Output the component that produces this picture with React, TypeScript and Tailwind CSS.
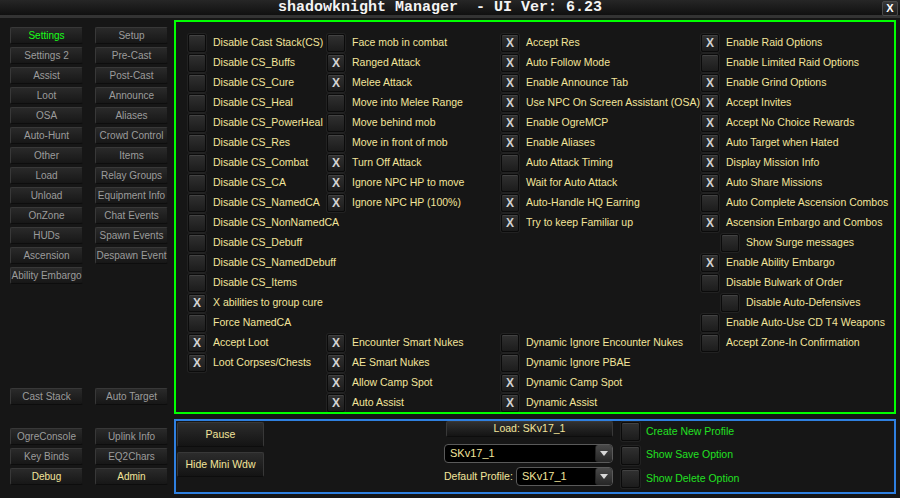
import React from "react";

type Item = { label?: string; checked?: boolean; indent?: boolean };

const col1: Item[] = [
  { label: "Disable Cast Stack(CS)" },
  { label: "Disable CS_Buffs" },
  { label: "Disable CS_Cure" },
  { label: "Disable CS_Heal" },
  { label: "Disable CS_PowerHeal" },
  { label: "Disable CS_Res" },
  { label: "Disable CS_Combat" },
  { label: "Disable CS_CA" },
  { label: "Disable CS_NamedCA" },
  { label: "Disable CS_NonNamedCA" },
  { label: "Disable CS_Debuff" },
  { label: "Disable CS_NamedDebuff" },
  { label: "Disable CS_Items" },
  { label: "X abilities to group cure", checked: true },
  { label: "Force NamedCA" },
  { label: "Accept Loot", checked: true },
  { label: "Loot Corpses/Chests", checked: true },
];

const col2: Item[] = [
  { label: "Face mob in combat" },
  { label: "Ranged Attack", checked: true },
  { label: "Melee Attack", checked: true },
  { label: "Move into Melee Range" },
  { label: "Move behind mob" },
  { label: "Move in front of mob" },
  { label: "Turn Off Attack", checked: true },
  { label: "Ignore NPC HP to move", checked: true },
  { label: "Ignore NPC HP (100%)", checked: true },
  {},
  {},
  {},
  {},
  {},
  {},
  { label: "Encounter Smart Nukes", checked: true },
  { label: "AE Smart Nukes", checked: true },
  { label: "Allow Camp Spot", checked: true },
  { label: "Auto Assist", checked: true },
];

const col3: Item[] = [
  { label: "Accept Res", checked: true },
  { label: "Auto Follow Mode", checked: true },
  { label: "Enable Announce Tab", checked: true },
  { label: "Use NPC On Screen Assistant (OSA)", checked: true },
  { label: "Enable OgreMCP", checked: true },
  { label: "Enable Aliases", checked: true },
  { label: "Auto Attack Timing" },
  { label: "Wait for Auto Attack" },
  { label: "Auto-Handle HQ Earring", checked: true },
  { label: "Try to keep Familiar up", checked: true },
  {},
  {},
  {},
  {},
  {},
  { label: "Dynamic Ignore Encounter Nukes" },
  { label: "Dynamic Ignore PBAE" },
  { label: "Dynamic Camp Spot", checked: true },
  { label: "Dynamic Assist", checked: true },
];

const col4: Item[] = [
  { label: "Enable Raid Options", checked: true },
  { label: "Enable Limited Raid Options" },
  { label: "Enable Grind Options", checked: true },
  { label: "Accept Invites", checked: true },
  { label: "Accept No Choice Rewards", checked: true },
  { label: "Auto Target when Hated", checked: true },
  { label: "Display Mission Info", checked: true },
  { label: "Auto Share Missions", checked: true },
  { label: "Auto Complete Ascension Combos" },
  { label: "Ascension Embargo and Combos", checked: true },
  { label: "Show Surge messages", indent: true },
  { label: "Enable Ability Embargo", checked: true },
  { label: "Disable Bulwark of Order" },
  { label: "Disable Auto-Defensives", indent: true },
  { label: "Enable Auto-Use CD T4 Weapons" },
  { label: "Accept Zone-In Confirmation" },
];

const sideLeft = [
  "Settings",
  "Settings 2",
  "Assist",
  "Loot",
  "OSA",
  "Auto-Hunt",
  "Other",
  "Load",
  "Unload",
  "OnZone",
  "HUDs",
  "Ascension",
  "Ability Embargo",
];
const sideRight = [
  "Setup",
  "Pre-Cast",
  "Post-Cast",
  "Announce",
  "Aliases",
  "Crowd Control",
  "Items",
  "Relay Groups",
  "Equipment Info",
  "Chat Events",
  "Spawn Events",
  "Despawn Event",
];

function Box({ checked, size = 18 }: { checked?: boolean; size?: number }) {
  return (
    <div
      className={
        "shrink-0 flex items-center justify-center rounded-[2px] border border-[#0b0b0b] bg-linear-to-b from-[#313131] to-[#1c1c1c] shadow-[inset_0_1px_0_#424242,0_0_0_1px_#222222] " +
        (size === 19 ? "w-[19px] h-[19px]" : "w-[18px] h-[18px]")
      }
    >
      {checked && (
        <span className="text-[#d2d2d2] text-[12px] font-bold leading-none font-['Liberation_Sans',sans-serif]">
          X
        </span>
      )}
    </div>
  );
}

function Row({ item }: { item: Item }) {
  if (!item.label) return <div className="h-[20px] shrink-0" />;
  return (
    <div className={"h-[20px] shrink-0 flex items-center gap-[7px] " + (item.indent ? "pl-[20px]" : "")}>
      <Box checked={item.checked} />
      <span className="text-[#f3e59b] text-[10.5px] whitespace-nowrap">{item.label}</span>
    </div>
  );
}

function SideBtn({ label, color = "text-[#9c9c9c]" }: { label: string; color?: string }) {
  return (
    <div
      className={
        "h-[17px] w-[73px] shrink-0 flex items-center justify-center whitespace-nowrap overflow-hidden rounded-[2px] border border-[#383838] border-b-[#0d0d0d] border-r-[#161616] bg-linear-to-b from-[#2a2a2a] to-[#171717] text-[10px] " +
        color
      }
    >
      {label}
    </div>
  );
}

function Dropdown({ value, width }: { value: string; width: string }) {
  return (
    <div className={"h-[19px] flex items-center rounded-[4px] border border-[#5a5a5a] bg-black " + width}>
      <span className="flex-1 pl-[5px] text-[#f3e59b] text-[11px]">{value}</span>
      <div className="w-[17px] h-[17px] flex items-center justify-center rounded-[3px] bg-linear-to-b from-[#4a4a4a] to-[#262626] border-l border-[#222]">
        <svg width="8" height="5" viewBox="0 0 8 5">
          <polygon points="0,0 8,0 4,5" fill="#d8d8d8" />
        </svg>
      </div>
    </div>
  );
}

export default function App() {
  return (
    <div className="w-[900px] h-[498px] bg-[#161616] flex flex-col overflow-hidden font-['Liberation_Sans',sans-serif]">
      {/* Title bar */}
      <div className="relative h-[18px] shrink-0 bg-linear-to-b from-[#262626] to-[#101010] border-b-[3px] border-[#333333] flex items-center justify-center pr-[20px]">
        <span className="font-['Liberation_Mono',monospace] font-bold text-[15px] leading-none text-[#f4f4f4] whitespace-pre">
          shadowknight Manager  - UI Ver: 6.23
        </span>
        <div className="absolute right-[2px] top-[1px] w-[16px] h-[15px] flex items-center justify-center rounded-[2px] border border-[#4a4a4a] bg-linear-to-b from-[#3a3a3a] to-[#1b1b1b] text-white text-[11px] font-bold">
          X
        </div>
      </div>

      <div className="flex flex-1 pt-[2px]">
        {/* Sidebar */}
        <div className="w-[174px] shrink-0 flex flex-col pl-[10px] pt-[7px]">
          <div className="flex gap-[12px]">
            <div className="flex flex-col gap-[3px]">
              {sideLeft.map((s, i) => (
                <SideBtn key={s} label={s} color={i === 0 ? "text-[#19ff19]" : "text-[#9c9c9c]"} />
              ))}
            </div>
            <div className="flex flex-col gap-[3px]">
              {sideRight.map((s) => (
                <SideBtn key={s} label={s} />
              ))}
            </div>
          </div>
          <div className="flex gap-[12px] mt-[104px]">
            <SideBtn label="Cast Stack" />
            <SideBtn label="Auto Target" />
          </div>
          <div className="flex gap-[12px] mt-[23px]">
            <div className="flex flex-col gap-[3px]">
              <SideBtn label="OgreConsole" />
              <SideBtn label="Key Binds" />
              <SideBtn label="Debug" color="text-[#f3e59b]" />
            </div>
            <div className="flex flex-col gap-[3px]">
              <SideBtn label="Uplink Info" />
              <SideBtn label="EQ2Chars" />
              <SideBtn label="Admin" color="text-[#f3e59b]" />
            </div>
          </div>
        </div>

        {/* Main */}
        <div className="w-[722px] flex flex-col">
          <div className="h-[394px] shrink-0 overflow-hidden border-2 border-[#00ff00] flex items-start pl-[12px] pt-[11px]">
            <div className="w-[139px] shrink-0 flex flex-col">
              {col1.map((it, i) => (
                <Row key={i} item={it} />
              ))}
            </div>
            <div className="w-[174px] shrink-0 flex flex-col">
              {col2.map((it, i) => (
                <Row key={i} item={it} />
              ))}
            </div>
            <div className="w-[200px] shrink-0 flex flex-col">
              {col3.map((it, i) => (
                <Row key={i} item={it} />
              ))}
            </div>
            <div className="flex-1 flex flex-col">
              {col4.map((it, i) => (
                <Row key={i} item={it} />
              ))}
            </div>
          </div>

          <div className="mt-[5px] h-[75px] shrink-0 border-2 border-[#2f80e0] flex">
            <div className="flex flex-col gap-[5px] pl-[1px] pt-[1px]">
              {["Pause", "Hide Mini Wdw"].map((s) => (
                <div
                  key={s}
                  className="w-[87px] h-[25px] flex items-center justify-center rounded-[2px] border border-[#383838] border-b-[#0d0d0d] bg-linear-to-b from-[#2c2c2c] to-[#141414] text-[#f3e59b] text-[10.5px]"
                >
                  {s}
                </div>
              ))}
            </div>
            <div className="ml-[180px] w-[169px] flex flex-col">
              <div className="ml-[2px] h-[16px] flex items-center justify-center rounded-[2px] border border-[#383838] border-b-[#0d0d0d] bg-linear-to-b from-[#303030] to-[#141414] text-[#f3e59b] text-[10.5px]">
                Load: SKv17_1
              </div>
              <div className="mt-[7px]">
                <Dropdown value="SKv17_1" width="w-[169px]" />
              </div>
              <div className="mt-[4px] flex items-center justify-between">
                <span className="text-[#f3e59b] text-[10.5px] whitespace-nowrap">Default Profile:</span>
                <Dropdown value="SKv17_1" width="w-[97px]" />
              </div>
            </div>
            <div className="ml-[8px] flex flex-col pt-[1px] gap-[4.5px]">
              {["Create New Profile", "Show Save Option", "Show Delete Option"].map((s) => (
                <div key={s} className="flex items-center gap-[6px] h-[19px]">
                  <Box size={19} />
                  <span className="text-[#22e022] text-[10.5px] whitespace-nowrap">{s}</span>
                </div>
              ))}
            </div>
          </div>
        </div>
      </div>
    </div>
  );
}
